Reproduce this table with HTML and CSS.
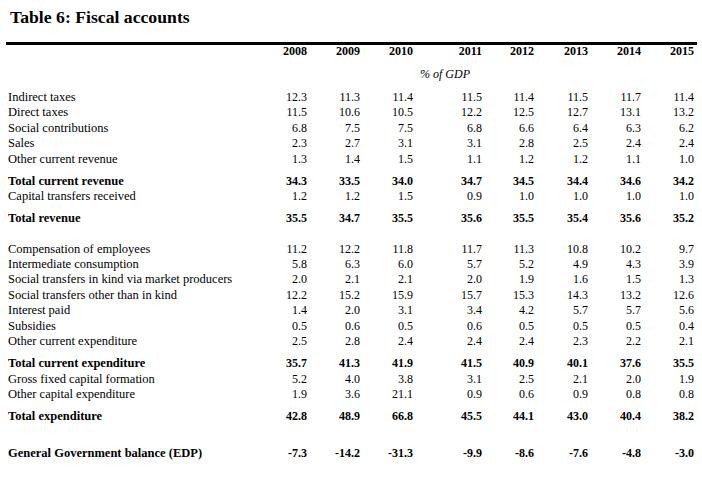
FILE: index.html
```html
<!DOCTYPE html>
<html>
<head>
<meta charset="utf-8">
<link rel="stylesheet" href="styles.css">
</head>
<body>
<div class="page">
  <h1 class="title">Table 6: Fiscal accounts</h1>
  <div class="rule"></div>
  <div class="row years">
    <span></span><span>2008</span><span>2009</span><span>2010</span><span>2011</span><span>2012</span><span>2013</span><span>2014</span><span>2015</span>
  </div>
  <div class="row unit">
    <span></span><span></span><span></span><span></span><span class="unit-label">% of GDP</span><span></span><span></span><span></span><span></span>
  </div>

  <div class="block first">
    <div class="row"><span>Indirect taxes</span><span>12.3</span><span>11.3</span><span>11.4</span><span>11.5</span><span>11.4</span><span>11.5</span><span>11.7</span><span>11.4</span></div>
    <div class="row"><span>Direct taxes</span><span>11.5</span><span>10.6</span><span>10.5</span><span>12.2</span><span>12.5</span><span>12.7</span><span>13.1</span><span>13.2</span></div>
    <div class="row"><span>Social contributions</span><span>6.8</span><span>7.5</span><span>7.5</span><span>6.8</span><span>6.6</span><span>6.4</span><span>6.3</span><span>6.2</span></div>
    <div class="row"><span>Sales</span><span>2.3</span><span>2.7</span><span>3.1</span><span>3.1</span><span>2.8</span><span>2.5</span><span>2.4</span><span>2.4</span></div>
    <div class="row"><span>Other current revenue</span><span>1.3</span><span>1.4</span><span>1.5</span><span>1.1</span><span>1.2</span><span>1.2</span><span>1.1</span><span>1.0</span></div>
    <div class="row total"><span>Total current revenue</span><span>34.3</span><span>33.5</span><span>34.0</span><span>34.7</span><span>34.5</span><span>34.4</span><span>34.6</span><span>34.2</span></div>
    <div class="row"><span>Capital transfers received</span><span>1.2</span><span>1.2</span><span>1.5</span><span>0.9</span><span>1.0</span><span>1.0</span><span>1.0</span><span>1.0</span></div>
    <div class="row total"><span>Total revenue</span><span>35.5</span><span>34.7</span><span>35.5</span><span>35.6</span><span>35.5</span><span>35.4</span><span>35.6</span><span>35.2</span></div>
  </div>

  <div class="block second">
    <div class="row"><span>Compensation of employees</span><span>11.2</span><span>12.2</span><span>11.8</span><span>11.7</span><span>11.3</span><span>10.8</span><span>10.2</span><span>9.7</span></div>
    <div class="row"><span>Intermediate consumption</span><span>5.8</span><span>6.3</span><span>6.0</span><span>5.7</span><span>5.2</span><span>4.9</span><span>4.3</span><span>3.9</span></div>
    <div class="row"><span>Social transfers in kind via market producers</span><span>2.0</span><span>2.1</span><span>2.1</span><span>2.0</span><span>1.9</span><span>1.6</span><span>1.5</span><span>1.3</span></div>
    <div class="row"><span>Social transfers other than in kind</span><span>12.2</span><span>15.2</span><span>15.9</span><span>15.7</span><span>15.3</span><span>14.3</span><span>13.2</span><span>12.6</span></div>
    <div class="row"><span>Interest paid</span><span>1.4</span><span>2.0</span><span>3.1</span><span>3.4</span><span>4.2</span><span>5.7</span><span>5.7</span><span>5.6</span></div>
    <div class="row"><span>Subsidies</span><span>0.5</span><span>0.6</span><span>0.5</span><span>0.6</span><span>0.5</span><span>0.5</span><span>0.5</span><span>0.4</span></div>
    <div class="row"><span>Other current expenditure</span><span>2.5</span><span>2.8</span><span>2.4</span><span>2.4</span><span>2.4</span><span>2.3</span><span>2.2</span><span>2.1</span></div>
    <div class="row total"><span>Total current expenditure</span><span>35.7</span><span>41.3</span><span>41.9</span><span>41.5</span><span>40.9</span><span>40.1</span><span>37.6</span><span>35.5</span></div>
    <div class="row"><span>Gross fixed capital formation</span><span>5.2</span><span>4.0</span><span>3.8</span><span>3.1</span><span>2.5</span><span>2.1</span><span>2.0</span><span>1.9</span></div>
    <div class="row"><span>Other capital expenditure</span><span>1.9</span><span>3.6</span><span>21.1</span><span>0.9</span><span>0.6</span><span>0.9</span><span>0.8</span><span>0.8</span></div>
    <div class="row total"><span>Total expenditure</span><span>42.8</span><span>48.9</span><span>66.8</span><span>45.5</span><span>44.1</span><span>43.0</span><span>40.4</span><span>38.2</span></div>
  </div>

  <div class="row total balance"><span>General Government balance (EDP)</span><span>-7.3</span><span>-14.2</span><span>-31.3</span><span>-9.9</span><span>-8.6</span><span>-7.6</span><span>-4.8</span><span>-3.0</span></div>
</div>
</body>
</html>
```

FILE: styles.css
```css
html, body {
  margin: 0;
  padding: 0;
  background: #ffffff;
  color: #000000;
  font-family: "Liberation Serif", "Times New Roman", serif;
}

.page {
  padding: 7px 0 0 6px;
  width: 691px;
}

.title {
  margin: 0 0 0 4px;
  font-size: 17.7px;
  line-height: 20px;
  font-weight: bold;
}

.rule {
  margin-top: 15px;
  height: 0;
  border-top: 3px solid #000;
}

.row {
  display: grid;
  grid-template-columns: 246px 53px 53px 53px 69px 52px 54px 53px 53px;
  padding-left: 2px;
  font-size: 12px;
  line-height: 15.45px;
  white-space: nowrap;
}

.row span {
  text-align: right;
}

.row span:first-child {
  text-align: left;
  font-size: 12.5px;
}

.years {
  font-weight: bold;
  line-height: 13px;
}

.unit {
  margin-top: 9px;
}

.row .unit-label {
  font-style: italic;
  text-align: center;
  padding-right: 5px;
}

.block.first {
  margin-top: 7.5px;
}

.block.second {
  margin-top: 15px;
}

.total {
  font-weight: bold;
  margin-top: 6.5px;
}

.balance {
  margin-top: 21.5px;
}
```
